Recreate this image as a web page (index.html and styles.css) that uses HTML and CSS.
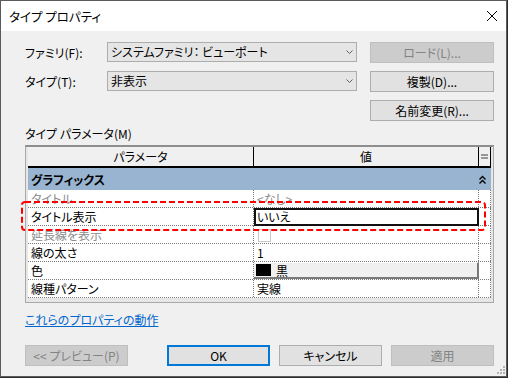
FILE: index.html
```html
<!DOCTYPE html>
<html lang="ja">
<head>
  <meta charset="UTF-8">
  <title>タイプ プロパティ</title>
  <link rel="stylesheet" href="styles.css">
</head>
<body>
  <div class="window">
    <div class="titlebar">
      <span class="title">タイプ プロパティ</span>
      <svg class="close" width="10" height="10" viewBox="0 0 10 10"><path d="M0 0L10 10M10 0L0 10" stroke="#000" stroke-width="1" fill="none"/></svg>
    </div>

    <div class="content">
      <div class="top">
        <label>ファミリ(F):</label>
        <div class="combo">
          <span>システムファミリ： ビューポート</span>
          <svg width="7" height="4" viewBox="0 0 7 4"><path d="M0.5 0.5L3.5 3.5L6.5 0.5" fill="none" stroke="#606060"/></svg>
        </div>
        <button class="btn" disabled>ロード(L)...</button>

        <label>タイプ(T):</label>
        <div class="combo">
          <span>非表示</span>
          <svg width="7" height="4" viewBox="0 0 7 4"><path d="M0.5 0.5L3.5 3.5L6.5 0.5" fill="none" stroke="#606060"/></svg>
        </div>
        <button class="btn">複製(D)...</button>

        <span></span>
        <span></span>
        <button class="btn">名前変更(R)...</button>
      </div>

      <div class="section-label">タイプ パラメータ(M)</div>

      <div class="grid-wrap">
        <div class="grid">
          <div class="row head">
            <div class="cell">パラメータ</div>
            <div class="cell">値</div>
            <div class="cell eq">
              <svg width="7" height="5" viewBox="0 0 7 5"><path d="M0 1H7M0 4H7" stroke="#404040" stroke-width="1"/></svg>
            </div>
          </div>
          <div class="group">
            <span>グラフィックス</span>
            <svg width="7" height="9" viewBox="0 0 7 9"><path d="M0.5 4.5L3.5 1.5L6.5 4.5M0.5 8.5L3.5 5.5L6.5 8.5" fill="none" stroke="#000" stroke-width="1.4"/></svg>
          </div>
          <div class="row">
            <div class="cell muted">タイトル</div>
            <div class="cell muted">&lt;なし&gt;</div>
            <div class="cell"></div>
          </div>
          <div class="row">
            <div class="cell">タイトル表示</div>
            <div class="cell edit">いいえ</div>
            <div class="cell"></div>
          </div>
          <div class="row">
            <div class="cell muted">延長線を表示</div>
            <div class="cell"><span class="check"></span></div>
            <div class="cell"></div>
          </div>
          <div class="row">
            <div class="cell">線の太さ</div>
            <div class="cell">1</div>
            <div class="cell"></div>
          </div>
          <div class="row">
            <div class="cell">色</div>
            <div class="cell color"><span class="swatch"></span>黒</div>
            <div class="cell"></div>
          </div>
          <div class="row">
            <div class="cell">線種パターン</div>
            <div class="cell">実線</div>
            <div class="cell"></div>
          </div>
        </div>
        <svg class="callout" width="465" height="30" viewBox="0 0 465 30">
          <rect x="1" y="1" width="463" height="28" rx="3" fill="none" stroke="#ff0000" stroke-width="2" stroke-dasharray="6 3"/>
        </svg>
      </div>

      <a class="link" href="#">これらのプロパティの動作</a>

      <div class="actions">
        <button class="btn" disabled>&lt;&lt; プレビュー(P)</button>
        <button class="btn default">OK</button>
        <button class="btn">キャンセル</button>
        <button class="btn" disabled>適用</button>
      </div>
    </div>

    <svg class="grip" width="9" height="9" viewBox="0 0 9 9">
      <rect x="6" y="0" width="2" height="2" fill="#b4b4b4"/>
      <rect x="3" y="3" width="2" height="2" fill="#b4b4b4"/>
      <rect x="6" y="3" width="2" height="2" fill="#b4b4b4"/>
      <rect x="0" y="6" width="2" height="2" fill="#b4b4b4"/>
      <rect x="3" y="6" width="2" height="2" fill="#b4b4b4"/>
      <rect x="6" y="6" width="2" height="2" fill="#b4b4b4"/>
    </svg>
  </div>
</body>
</html>
```

FILE: styles.css
```css
:root {
  --face: #f0f0f0;
  --btn-bg: #e1e1e1;
  --btn-border: #adadad;
  --muted: #8c8c8c;
  --group: #99b4d1;
  --dots: #7a7a7a;
}
* { box-sizing: border-box; }
body {
  margin: 0;
  background: #2d2d30;
  font-family: "Noto Sans CJK JP", "Noto Sans", sans-serif;
  font-size: 12px;
  font-feature-settings: "palt";
  color: #000;
}
.window {
  position: relative;
  width: 507px;
  height: 377px;
  border: 1px solid #5a5a5a;
  background: var(--face);
}
.titlebar {
  height: 30px;
  background: #fff;
  display: flex;
  align-items: center;
  justify-content: space-between;
  padding: 0 9px 0 8px;
}
.title { font-size: 12.5px; }
.content { padding: 11px 11px 0 24px; }

.top {
  display: grid;
  grid-template-columns: 69px 250px 124px;
  grid-auto-rows: 21px;
  column-gap: 13px;
  row-gap: 8px;
}
.top label { align-self: center; line-height: 16px; white-space: nowrap; }
.combo {
  height: 20px;
  border: 1px solid var(--btn-border);
  background: #e5e5e5;
  display: flex;
  align-items: center;
  justify-content: space-between;
  padding: 0 3px 1px 3px;
}
.btn {
  height: 21px;
  padding: 0;
  border: 1px solid var(--btn-border);
  background: var(--btn-bg);
  font: inherit;
  color: #000;
}
.btn:disabled {
  background: #cccccc;
  border-color: #bfbfbf;
  color: #838383;
}
.btn.default { border: 2px solid #0078d7; }

.section-label { margin-top: 5px; line-height: 16px; }

.grid-wrap {
  position: relative;
  width: 469px;
  margin-top: 3px;
}
.grid {
  border: 1px solid #a9a9a9;
  border-top: 2px solid #8e8e8e;
  background: #e6e6e6;
  padding: 0 2px 4px 2px;
}
.row {
  display: grid;
  grid-template-columns: 226px 225px 12px;
  height: 18px;
  background: #fff;
  border-bottom: 1px dotted var(--dots);
}
.cell {
  border-right: 1px dotted var(--dots);
  padding-left: 3px;
  line-height: 17px;
  white-space: nowrap;
}
.cell.muted { color: var(--muted); }
.row.head {
  height: 21px;
  background: var(--face);
  border-bottom: 2px solid #000;
}
.row.head .cell {
  border-right: 1px solid #000;
  text-align: center;
  padding: 0;
  line-height: 19px;
}
.cell.eq {
  display: flex;
  align-items: center;
  justify-content: center;
}
.group {
  height: 22px;
  background: var(--group);
  display: flex;
  align-items: center;
  justify-content: space-between;
  padding: 0 5px 0 3px;
  font-weight: bold;
}
.cell.edit {
  position: relative;
  height: 18px;
  border: 2px solid #111;
  padding-left: 1px;
  line-height: 14px;
}
.check {
  display: inline-block;
  width: 13px;
  height: 13px;
  margin: 3px 0 0 1px;
  border: 1px solid #c8c8c8;
  background: #fff;
  vertical-align: top;
}
.cell.color {
  display: flex;
  align-items: center;
  gap: 5px;
  padding-left: 2px;
  background: var(--face);
  border-top: 1px solid #fff;
  border-right: 2px solid #7a7a7a;
  border-bottom: 2px solid #7a7a7a;
  height: 17px;
}
.swatch {
  width: 15px;
  height: 12px;
  background: #000;
}
.callout {
  position: absolute;
  left: -4px;
  top: 56px;
}

.link {
  display: inline-block;
  margin-top: 9px;
  line-height: 16px;
  color: #0066cc;
  text-decoration: underline;
}
.actions {
  display: flex;
  margin-top: 17px;
}
.actions .btn { width: 103px; margin-left: 9px; }
.actions .btn:first-child { margin-left: 0; }
.actions .btn.default { margin-left: 39px; }

.grip {
  position: absolute;
  right: 0;
  bottom: 1px;
}
```
